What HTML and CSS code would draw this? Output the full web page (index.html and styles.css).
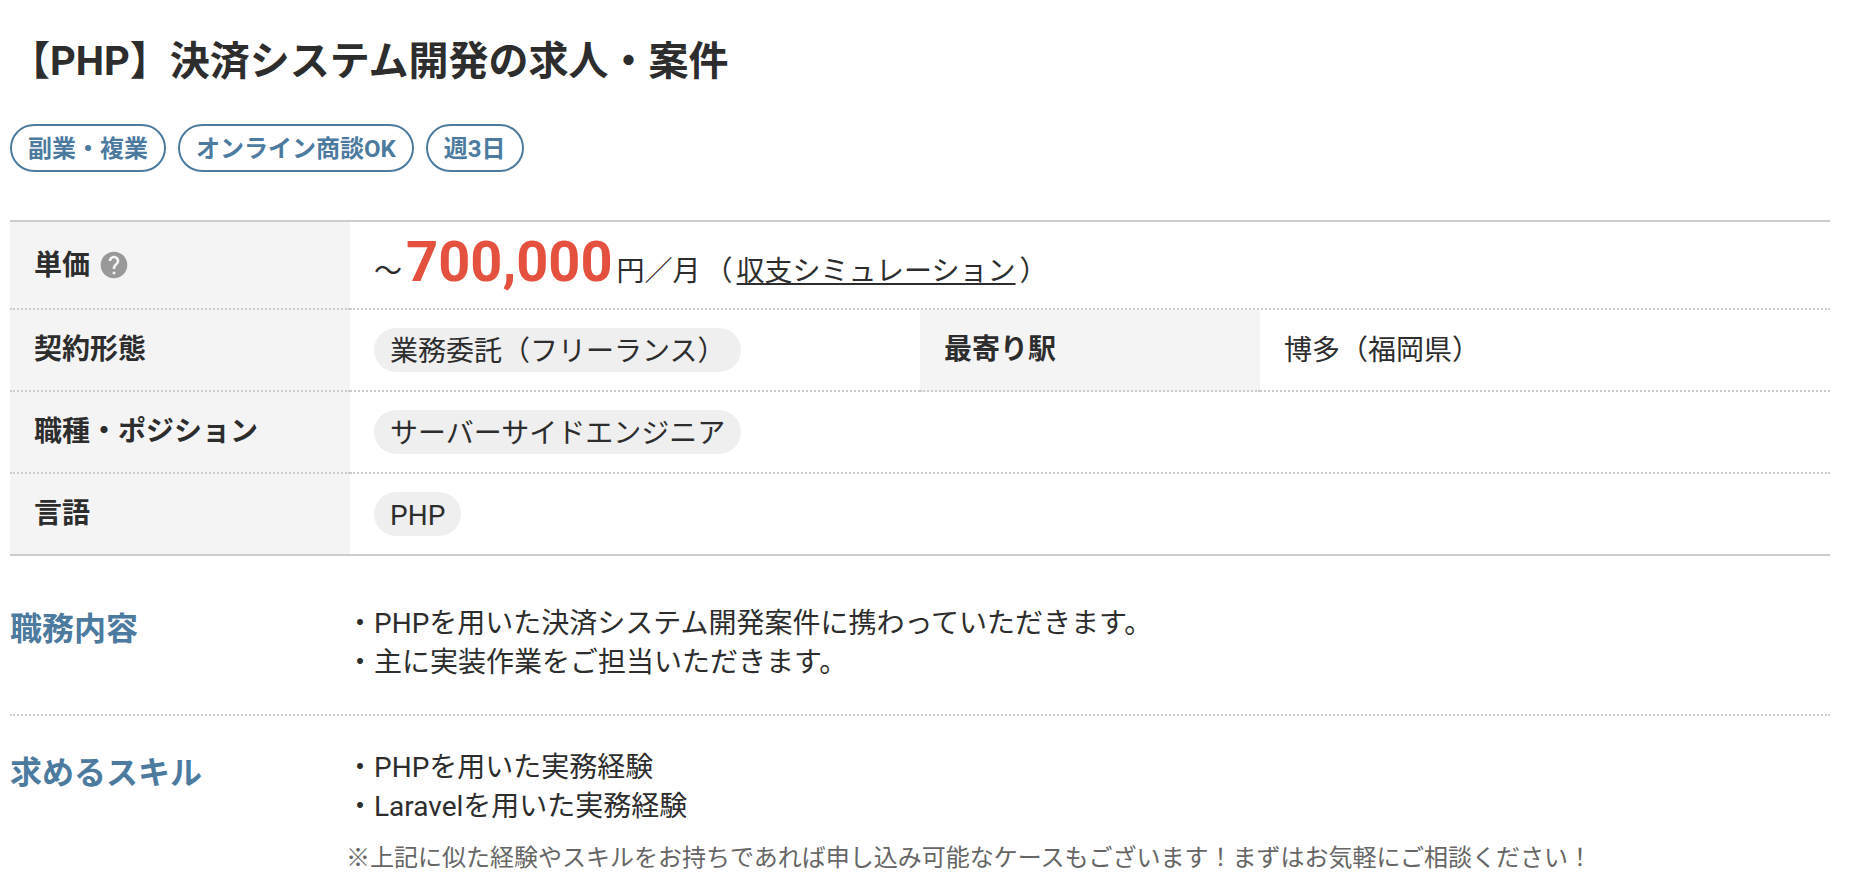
FILE: index.html
```html
<!DOCTYPE html>
<html lang="ja">
<head>
<meta charset="utf-8">
<meta name="viewport" content="width=device-width, initial-scale=1">
<title>【PHP】決済システム開発の求人・案件</title>
<link rel="stylesheet" href="styles.css">
</head>
<body>
<main class="job">
  <h1 class="job-title">【PHP】決済システム開発の求人・案件</h1>
  <ul class="tags">
    <li class="tag">副業・複業</li>
    <li class="tag">オンライン商談OK</li>
    <li class="tag">週3日</li>
  </ul>
  <table class="summary">
    <colgroup>
      <col class="col-label"><col><col class="col-label"><col>
    </colgroup>
    <tbody>
      <tr class="price-row">
        <th scope="row">
          <span class="label">単価
            <button class="help" type="button" aria-label="単価について"><svg class="help-icon" viewBox="0 0 24 24" aria-hidden="true"><path d="M12 2C6.48 2 2 6.48 2 12s4.48 10 10 10 10-4.48 10-10S17.52 2 12 2zm1 17h-2v-2h2v2zm2.07-7.75l-.9.92C13.45 12.9 13 13.5 13 15h-2v-.5c0-1.1.45-2.1 1.17-2.83l1.24-1.26c.37-.36.59-.86.59-1.41 0-1.1-.9-2-2-2s-2 .9-2 2H8c0-2.21 1.79-4 4-4s4 1.79 4 4c0 .88-.36 1.68-.93 2.25z"/></svg></button>
          </span>
        </th>
        <td colspan="3">～<strong class="amount">700,000</strong>円／月<span class="sim">（<a class="sim-link" href="#simulation">収支シミュレーション</a>）</span></td>
      </tr>
      <tr>
        <th scope="row">契約形態</th>
        <td><span class="pill">業務委託（フリーランス）</span></td>
        <th scope="row">最寄り駅</th>
        <td>博多（福岡県）</td>
      </tr>
      <tr>
        <th scope="row">職種・ポジション</th>
        <td colspan="3"><span class="pill">サーバーサイドエンジニア</span></td>
      </tr>
      <tr>
        <th scope="row">言語</th>
        <td colspan="3"><span class="pill">PHP</span></td>
      </tr>
    </tbody>
  </table>
  <section class="detail">
    <h2 class="detail-title">職務内容</h2>
    <div class="detail-body">
      <p class="text">・PHPを用いた決済システム開発案件に携わっていただきます。<br>・主に実装作業をご担当いただきます。</p>
    </div>
  </section>
  <section class="detail">
    <h2 class="detail-title">求めるスキル</h2>
    <div class="detail-body">
      <p class="text">・PHPを用いた実務経験<br>・Laravelを用いた実務経験</p>
      <p class="note">※上記に似た経験やスキルをお持ちであれば申し込み可能なケースもございます！まずはお気軽にご相談ください！</p>
    </div>
  </section>
</main>
</body>
</html>
```

FILE: styles.css
```css
* {
  box-sizing: border-box;
}

body {
  margin: 0;
  background: #fff;
  color: #2d2d2d;
  font-family: Roboto, "Noto Sans CJK JP", sans-serif;
  font-size: 28px;
  line-height: 39px;
}

.job {
  padding: 34px 32px 0 10px;
}

.job-title {
  margin: 0;
  font-size: 40px;
  line-height: 56px;
  font-weight: 700;
}

.tags {
  display: flex;
  flex-wrap: wrap;
  gap: 12px;
  margin: 34px 0 48px;
  padding: 0;
  list-style: none;
}

.tag {
  padding: 6px 16px 4px;
  border: 2px solid #4c7b9f;
  border-radius: 24px;
  color: #4c7b9f;
  font-size: 24px;
  line-height: 34px;
  font-weight: 700;
}

.summary {
  width: 100%;
  table-layout: fixed;
  border-spacing: 0;
  border-top: 2px solid #ccc;
  border-bottom: 2px solid #ccc;
}

.col-label {
  width: 340px;
}

.summary th,
.summary td {
  height: 82px;
  padding: 0 24px;
  border-bottom: 2px dotted #ccc;
  text-align: left;
  vertical-align: middle;
}

.summary th {
  padding-bottom: 2px;
  background: #f4f4f4;
  font-weight: 700;
}

.summary .price-row th,
.summary .price-row td {
  height: 88px;
}

.summary .price-row th {
  padding-bottom: 0;
}

.summary .price-row td {
  padding-bottom: 6px;
}

.summary tr:last-child th,
.summary tr:last-child td {
  height: 80px;
  border-bottom: 0;
}

.label {
  display: flex;
  align-items: center;
  gap: 8px;
}

.help {
  display: flex;
  padding: 0;
  border: 0;
  background: none;
  cursor: pointer;
}

.help-icon {
  width: 32px;
  height: 32px;
  fill: #999;
}

.amount {
  margin: 0 4px;
  color: #e5513f;
  font-size: 56px;
  line-height: 56px;
  font-weight: 700;
}

.sim {
  margin-left: 4px;
}

.sim-link {
  margin: 0 4px;
  color: inherit;
  text-decoration: underline;
}

.pill {
  display: inline-block;
  padding: 3px 16px 0;
  border-radius: 22px;
  background: #efefef;
  line-height: 41px;
  vertical-align: middle;
}

.detail {
  display: flex;
  padding: 32px 0;
}

.summary + .detail {
  padding-top: 48px;
}

.detail + .detail {
  border-top: 2px dotted #ccc;
}

.detail-title {
  flex: 0 0 336px;
  margin: 0;
  color: #4c7b9f;
  font-size: 32px;
  line-height: 50px;
  font-weight: 700;
}

.detail-body {
  flex: 1;
}

.text,
.note {
  margin: 0;
}

.note {
  margin-top: 14px;
  color: #666;
  font-size: 24px;
  line-height: 36px;
}
```
